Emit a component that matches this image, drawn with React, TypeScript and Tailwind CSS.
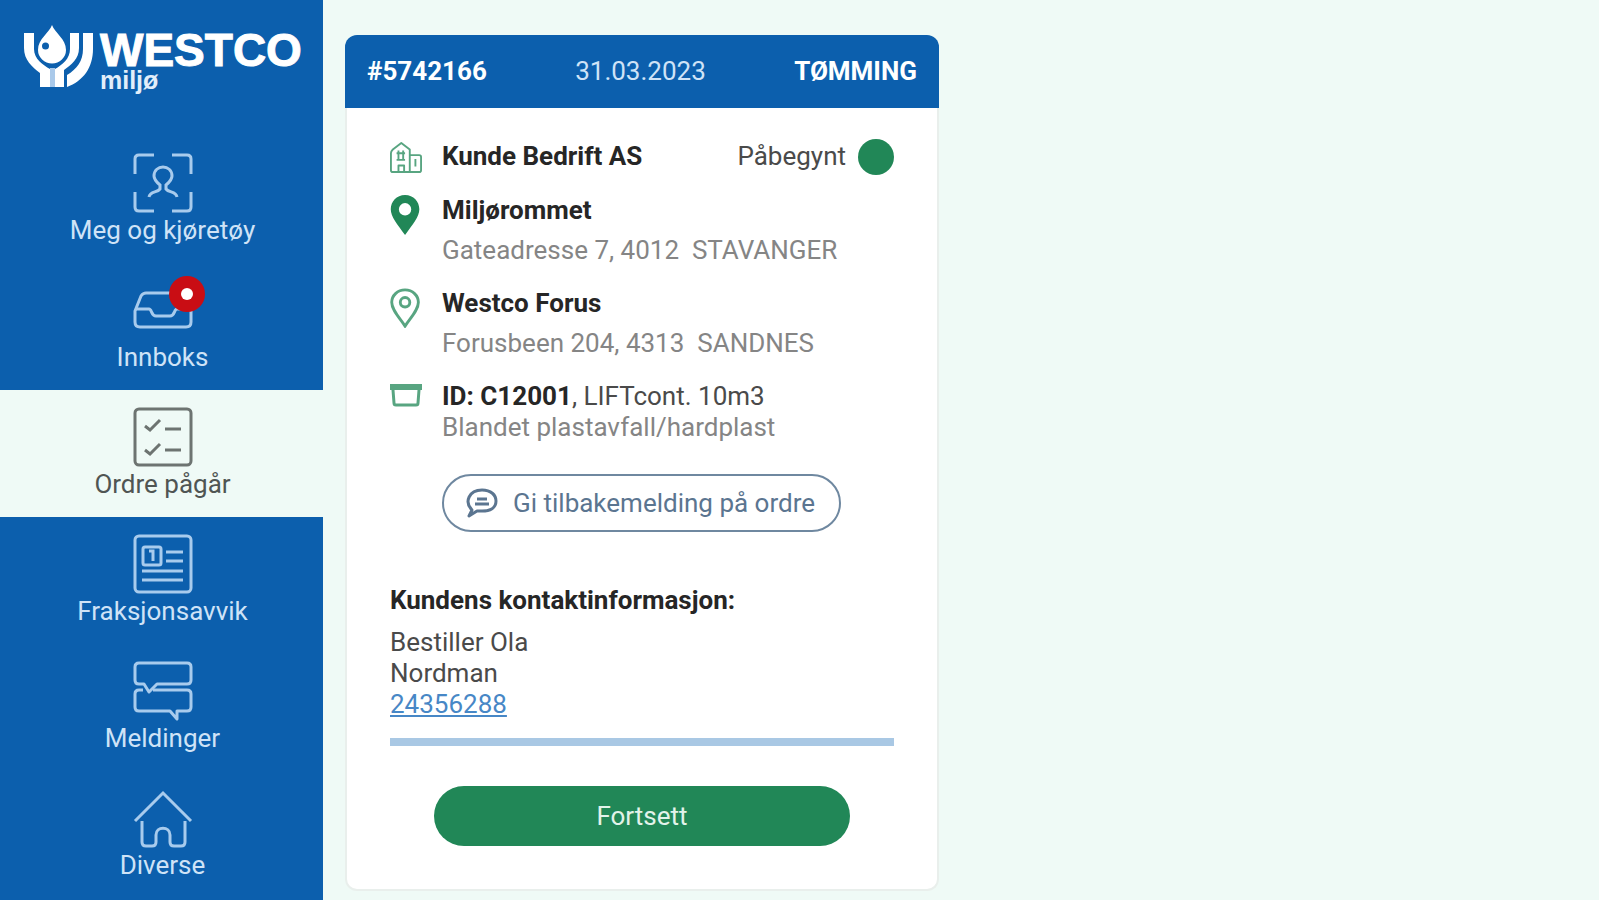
import React from 'react';

type IconProps = { className?: string };

function LogoMark() {
  return (
    <svg viewBox="0 0 72 64" className="h-16 w-18 shrink-0" fill="none" aria-hidden="true">
      <path d="M0 9H10V25C10 35 19 41 26 45V63H16V49C8 43 0 36 0 24Z" fill="#fff" />
      <path d="M46 9H55V24C55 35 47 41 40 46V63H31V45C38 41 46 35 46 25Z" fill="#fff" />
      <path d="M59 9H69V25C69 44 59 57 43 63V51C53 45 59 37 59 25Z" fill="#fff" />
      <path d="M26 44H31V63H26Z" fill="#a9c9ea" />
      <path d="M28 1C31 9 42 15 42 26A14 13.500 0 0 1 14 26C14 15 25 9 28 1Z" fill="#fff" />
      <circle cx="21.500" cy="22" r="3.500" fill="#0c5fad" />
    </svg>
  );
}

function ProfileIcon() {
  return (
    <svg viewBox="0 0 60 60" className="size-15" fill="none" stroke="currentColor" strokeWidth="3" aria-hidden="true">
      <path d="M2 21V6Q2 2 6 2H21M39 2H54Q58 2 58 6V21M58 39V54Q58 58 54 58H39M21 58H6Q2 58 2 54V39" />
      <path d="M16 44C17 38 24 40 27 36V32C22 28 21 24 21 23C21 11 39 11 39 23C39 24 38 28 33 32V36C36 40 43 38 44 44" />
    </svg>
  );
}

function InboxIcon() {
  return (
    <svg viewBox="0 0 60 60" className="size-15" fill="none" stroke="currentColor" strokeWidth="3" strokeLinejoin="round" aria-hidden="true">
      <path d="M2 31L8 16Q10 13 13 13H47Q50 13 52 16L58 31V42Q58 47 53 47H7Q2 47 2 42Z" />
      <path d="M2 29H16C19 29 18 36 23 36H37C42 36 41 29 44 29H58" />
    </svg>
  );
}

function ChecklistIcon() {
  return (
    <svg viewBox="0 0 60 60" className="size-15" fill="none" stroke="currentColor" strokeWidth="3" aria-hidden="true">
      <rect x="2" y="2" width="56" height="56" rx="4" />
      <path d="M12 19L17 23L27 13M12 43L17 47L27 37M32 22H48M32 43H48" />
    </svg>
  );
}

function ArticleIcon() {
  return (
    <svg viewBox="0 0 60 60" className="size-15" fill="none" stroke="currentColor" strokeWidth="3" aria-hidden="true">
      <rect x="2" y="2" width="56" height="56" rx="4" />
      <rect x="10" y="13" width="18" height="18" rx="2" />
      <path d="M16 17H20V27M33 18H50M33 27H50M9 37H50M9 46H50" />
    </svg>
  );
}

function MessagesIcon() {
  return (
    <svg viewBox="0 0 60 60" className="size-15" fill="none" stroke="currentColor" strokeWidth="3" strokeLinejoin="round" aria-hidden="true">
      <path d="M6 2H54Q58 2 58 6V19Q58 23 54 23H24L16 31L11 23H6Q2 23 2 19V6Q2 2 6 2Z" />
      <path d="M10 29H6Q2 29 2 33V46Q2 50 6 50H37L44 58V50H54Q58 50 58 46V33Q58 29 54 29H20" />
    </svg>
  );
}

function HomeIcon() {
  return (
    <svg viewBox="0 0 60 60" className="size-15" fill="none" stroke="currentColor" strokeWidth="3" aria-hidden="true">
      <path d="M2 33L30 5L58 33" />
      <path d="M9 33V54Q9 58 13 58H19Q23 58 23 54V47C23 38 37 38 37 47V54Q37 58 41 58H48Q52 58 52 54V33" />
    </svg>
  );
}

function BuildingIcon() {
  return (
    <svg viewBox="0 0 34 34" className="size-8" fill="none" stroke="currentColor" strokeWidth="2" strokeLinejoin="round" aria-hidden="true">
      <g opacity="0.75">
        <path d="M3 33Q1 33 1 31V13Q1 11 3 9L12 2L21 9V33M21 15H31Q33 15 33 17V31Q33 33 31 33H3" />
        <path d="M9 33V26H15V33M7 13H16M7 20H16M9 10V20M14 10V20M27 19V27" />
      </g>
    </svg>
  );
}

function PinSolidIcon() {
  return (
    <svg viewBox="0 0 32 42" className="h-10 w-8" aria-hidden="true">
      <path fillRule="evenodd" fill="currentColor" d="M15 0C6 0 0 7 0 15C0 23 7 31 15 42C23 31 30 23 30 15C30 7 24 0 15 0ZM15 8.500A6.500 6.500 0 1 1 15 21.500A6.500 6.500 0 1 1 15 8.500Z" />
    </svg>
  );
}

function PinOutlineIcon() {
  return (
    <svg viewBox="0 0 32 42" className="h-10 w-8" fill="none" stroke="currentColor" strokeWidth="3" aria-hidden="true">
      <g opacity="0.75">
        <path d="M15 2C7 2 1 8 1 15C1 23 9 31 15 40C21 31 29 23 29 15C29 8 23 2 15 2Z" />
        <circle cx="15" cy="15" r="5" />
      </g>
    </svg>
  );
}

function ContainerIcon() {
  return (
    <svg viewBox="0 0 32 32" className="size-8" fill="none" stroke="currentColor" strokeWidth="3" strokeLinejoin="round" aria-hidden="true">
      <g opacity="0.75">
        <path d="M0 3H32V9H0Z" fill="currentColor" stroke="none" />
        <path d="M3 9L4 22Q4 24 6 24H26Q28 24 28 22L29 9" />
      </g>
    </svg>
  );
}

function CommentIcon() {
  return (
    <svg viewBox="0 0 32 32" className="size-8" fill="none" stroke="currentColor" strokeWidth="3" strokeLinejoin="round" aria-hidden="true">
      <path d="M3 29L6 23C-2 15 3 3 16 3C25 3 30 8 30 14C30 21 24 24 16 24H11Z" />
      <path d="M11 12H21M9 17H23" />
    </svg>
  );
}

const navItems: { label: string; Icon: React.FC<IconProps>; active?: boolean; badge?: boolean }[] = [
  { label: 'Meg og kjøretøy', Icon: ProfileIcon },
  { label: 'Innboks', Icon: InboxIcon, badge: true },
  { label: 'Ordre pågår', Icon: ChecklistIcon, active: true },
  { label: 'Fraksjonsavvik', Icon: ArticleIcon },
  { label: 'Meldinger', Icon: MessagesIcon },
  { label: 'Diverse', Icon: HomeIcon },
];

function Sidebar() {
  return (
    <aside className="w-[323px] shrink-0 bg-[#0c5fad]">
      <a href="#" className="flex h-[136px] items-start gap-1 pt-6 pl-6 text-white">
        <LogoMark />
        <span className="flex flex-col pt-1 font-['Liberation_Sans',sans-serif] font-bold">
          <span className="text-[46px] leading-11 [-webkit-text-stroke:1px_white]">WESTCO</span>
          <span className="text-[25px] leading-4 text-[#e2eefa]">miljø</span>
        </span>
      </a>
      <nav>
        {navItems.map(({ label, Icon, active, badge }) => (
          <a
            key={label}
            href="#"
            aria-current={active ? 'page' : undefined}
            className={
              active
                ? 'flex h-[127px] flex-col items-center gap-0.5 bg-[#effaf6] pt-[17px] pl-[2px] text-[#6d7471]'
                : 'flex h-[127px] flex-col items-center gap-0.5 pt-[17px] pl-[2px] text-[#a8cbed]'
            }
          >
            <span className="relative">
              <Icon />
              {badge && (
                <span className="absolute -top-1 -right-3 flex size-9 items-center justify-center rounded-full bg-[#c90d14]">
                  <span className="size-3 rounded-full bg-white" />
                </span>
              )}
            </span>
            <span className={active ? 'text-[#4f5553]' : 'text-[#cfe3f7]'}>{label}</span>
          </a>
        ))}
      </nav>
    </aside>
  );
}

function DetailRow({ icon, children }: { icon: React.ReactNode; children: React.ReactNode }) {
  return (
    <div className="flex gap-5">
      <span className="w-8 shrink-0 text-[#218757]">{icon}</span>
      <div className="grow">{children}</div>
    </div>
  );
}

function OrderCard() {
  return (
    <article className="w-[594px]">
      <header className="flex h-[73px] items-center justify-between rounded-t-xl bg-[#0c5fad] px-[22px] text-white">
        <strong>#5742166</strong>
        <time dateTime="2023-03-31" className="text-[#cfe3f7]">31.03.2023</time>
        <strong>TØMMING</strong>
      </header>
      <div className="rounded-b-xl border-2 border-t-0 border-[#e9efec] bg-white px-[43px] pt-[33px] pb-[43px] text-[#4a4a4a]">
        <div className="flex flex-col gap-[22px]">
          <DetailRow icon={<BuildingIcon />}>
            <div className="flex h-[31px] items-center justify-between">
              <strong className="text-[#262626]">Kunde Bedrift AS</strong>
              <span className="flex items-center gap-3">
                Påbegynt
                <span className="size-9 rounded-full bg-[#218757]" />
              </span>
            </div>
          </DetailRow>
          <DetailRow icon={<PinSolidIcon />}>
            <strong className="block text-[#262626]">Miljørommet</strong>
            <p className="mt-[9px] whitespace-pre text-[#858585]">{'Gateadresse 7, 4012  STAVANGER'}</p>
          </DetailRow>
          <DetailRow icon={<PinOutlineIcon />}>
            <strong className="block text-[#262626]">Westco Forus</strong>
            <p className="mt-[9px] whitespace-pre text-[#858585]">{'Forusbeen 204, 4313  SANDNES'}</p>
          </DetailRow>
          <DetailRow icon={<ContainerIcon />}>
            <p>
              <strong className="text-[#262626]">ID: C12001</strong>, LIFTcont. 10m3
            </p>
            <p className="text-[#858585]">Blandet plastavfall/hardplast</p>
          </DetailRow>
        </div>
        <button
          type="button"
          className="mt-[31px] ml-13 flex h-[58px] w-[399px] items-center justify-between rounded-full border-2 border-[#6f88a0] pr-6 pl-[22px] text-[#5b7590]"
        >
          <CommentIcon />
          Gi tilbakemelding på ordre
        </button>
        <h2 className="mt-[53px] font-bold text-[#262626]">Kundens kontaktinformasjon:</h2>
        <p className="mt-[11px] w-44">Bestiller Ola Nordman</p>
        <a href="tel:24356288" className="block w-fit text-[#4787c6] underline decoration-2 underline-offset-2">
          24356288
        </a>
        <hr className="mt-[18px] border-t-8 border-[#a9c8e4]" />
        <button type="button" className="mx-auto mt-10 block h-[60px] w-[416px] rounded-full bg-[#218757] text-[#e2f3ea]">
          Fortsett
        </button>
      </div>
    </article>
  );
}

export default function App() {
  return (
    <div className="flex min-h-screen bg-[#effaf6] font-['Roboto',sans-serif] text-[26px] leading-[31px]">
      <Sidebar />
      <main className="grow pt-[35px] pl-[22px]">
        <OrderCard />
      </main>
    </div>
  );
}
